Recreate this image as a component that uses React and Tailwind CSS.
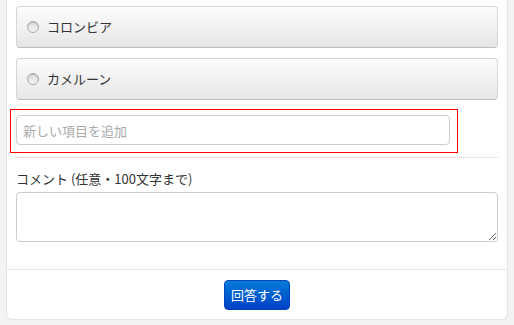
export default function App() {
  const options = ['コロンビア', 'カメルーン']
  const font = { fontFamily: '"Noto Sans CJK JP", "Noto Sans", sans-serif' }

  return (
    <div className="min-h-[325px] bg-[#f3f3f3] px-[6px] pb-[6px]" style={font}>
      <div className="bg-white border-x border-b border-[#e6e3df] rounded-b-[6px]">
        <div className="px-[9px] pt-[6px]">
          <div className="space-y-[10px]">
            {options.map((o) => (
              <div
                key={o}
                className="h-[42px] flex items-center px-[10px] rounded-[4px] border border-[#d6d6d6] border-b-[#bdbdbd] bg-gradient-to-b from-[#fdfdfd] to-[#e6e6e6] text-[13px] text-[#333]"
              >
                <span className="w-[12px] h-[12px] rounded-full border border-[#a9a9a9] bg-gradient-to-b from-[#dcdcdc] to-[#f5f5f5] shadow-[inset_0_1px_1px_rgba(0,0,0,0.15)]" />
                <span className="ml-[8px]">{o}</span>
              </div>
            ))}
          </div>

          <div className="mt-[9px] -ml-[6px] w-[448px] border border-[#ff0000] pt-[5px] pb-[7px] pl-[5px]">
            <input
              className="w-[434px] h-[30px] rounded-[4px] border border-[#cccccc] px-[6px] text-[13px] text-[#333] placeholder:text-[#aaaaaa] outline-none"
              placeholder="新しい項目を追加"
            />
          </div>

          <div className="mt-[4px] border-t border-dotted border-[#cfcfcf]" />

          <p className="mt-[12px] text-[13px] text-[#333] leading-[18px]">コメント (任意・100文字まで)</p>
          <textarea className="mt-[4px] block w-full h-[50px] rounded-[4px] border border-[#cccccc] outline-none" />
        </div>

        <div className="mt-[27px] border-t border-[#e6e6e6] flex justify-center pt-[10px] pb-[9px]">
          <button className="w-[66px] h-[30px] rounded-[4px] border border-[#0044bb] bg-gradient-to-b from-[#0a7ad8] to-[#003fc6] text-white text-[13px]">
            回答する
          </button>
        </div>
      </div>
    </div>
  )
}
